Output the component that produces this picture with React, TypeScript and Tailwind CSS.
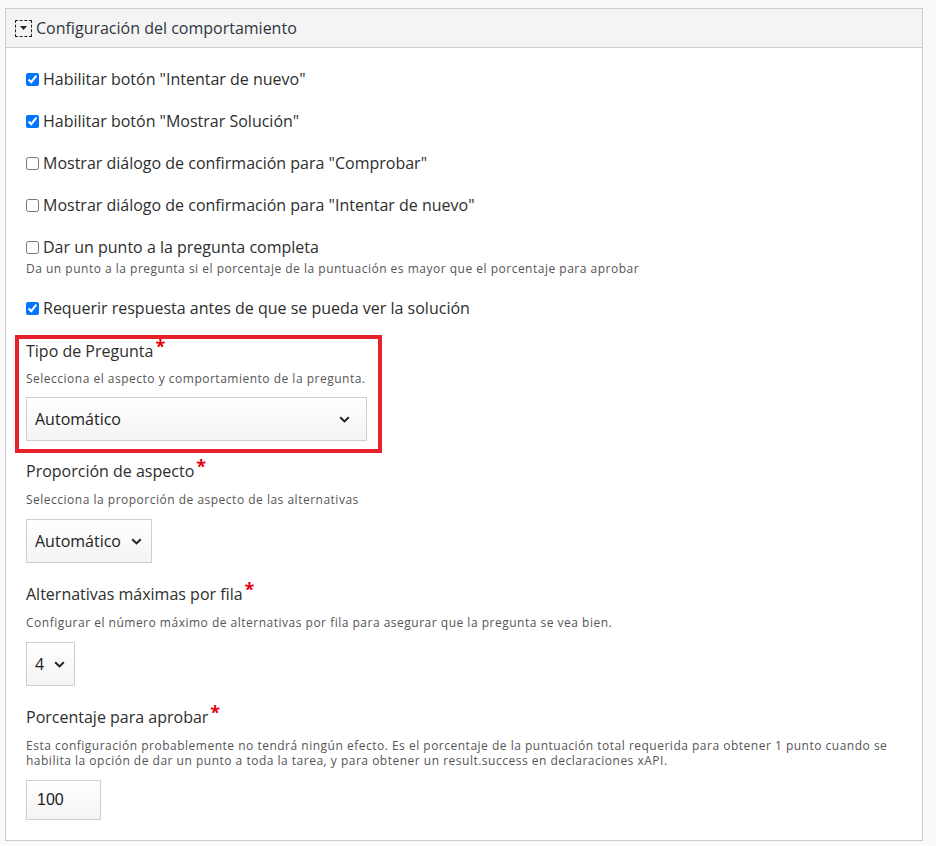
import type { ReactNode } from "react";

const FONT = { fontFamily: '"Open Sans", "Noto Sans", sans-serif' };

function Chevron() {
  return (
    <svg width="11" height="7" viewBox="0 0 11 7" className="shrink-0">
      <path d="M1.2 1.2 L5.5 5.4 L9.8 1.2" fill="none" stroke="#222" strokeWidth="2" />
    </svg>
  );
}

function Check({ label, checked, desc }: { label: string; checked?: boolean; desc?: string }) {
  return (
    <div className={desc ? "mb-[20px]" : "mb-[18px]"}>
      <label className="flex h-6 items-center text-[16px] font-medium text-[#2e2e2e]">
        <input
          type="checkbox"
          defaultChecked={checked}
          className="mr-[4px] h-[13px] w-[13px] accent-[#0075ff]"
        />
        {label}
      </label>
      {desc && <div className="mt-[2px] text-[12px] leading-[15px] tracking-[0.5px] text-[#555]">{desc}</div>}
    </div>
  );
}

function Label({ children }: { children: ReactNode }) {
  return (
    <div className="flex h-6 items-center text-[16px] font-medium text-[#2e2e2e]">
      {children}
      <span className="ml-[2px] -mt-[10px] text-[18px] font-bold text-[#e3000f]">*</span>
    </div>
  );
}

function Select({ value, width, between }: { value: string; width: string; between?: boolean }) {
  return (
    <div
      className={`flex h-[44px] items-center border border-[#cfcfcf] bg-gradient-to-b from-white to-[#f4f4f4] pl-[8px] pr-[16px] text-[16px] text-[#222] ${width} ${
        between ? "justify-between" : "gap-[10px]"
      }`}
    >
      <span>{value}</span>
      <Chevron />
    </div>
  );
}

export default function App() {
  return (
    <div className="min-h-[846px] bg-[#fafafa] pl-[5px] pt-[8px]" style={FONT}>
      <div className="w-[918px] border border-[#cccccc] bg-white">
        {/* en-tête repliable */}
        <div className="flex h-[39px] items-center gap-[4px] border-b border-[#cccccc] bg-[#f4f4f4] pl-[9px] text-[16px] text-[#2f3640]">
          <span className="flex h-[17px] w-[17px] items-center justify-center border border-dashed border-[#222]">
            <svg width="7" height="4" viewBox="0 0 7 4">
              <path d="M0 0 H7 L3.5 4 Z" fill="#222" />
            </svg>
          </span>
          Configuración del comportamiento
        </div>

        <div className="px-5 pb-[20px] pt-[19px]">
          <Check checked label={'Habilitar botón "Intentar de nuevo"'} />
          <Check checked label={'Habilitar botón "Mostrar Solución"'} />
          <Check label={'Mostrar diálogo de confirmación para "Comprobar"'} />
          <Check label={'Mostrar diálogo de confirmación para "Intentar de nuevo"'} />
          <Check
            label="Dar un punto a la pregunta completa"
            desc="Da un punto a la pregunta si el porcentaje de la puntuación es mayor que el porcentaje para aprobar"
          />
          <label className="flex h-6 items-center text-[16px] font-medium text-[#2e2e2e]">
            <input type="checkbox" defaultChecked className="mr-[4px] h-[13px] w-[13px] accent-[#0075ff]" />
            Requerir respuesta antes de que se pueda ver la solución
          </label>

          {/* champ mis en évidence */}
          <div className="-ml-[11px] mt-[15px] w-[367px] border-4 border-[#e8202a] pb-[8px] pl-[7px] pr-[11px]">
            <Label>Tipo de Pregunta</Label>
            <div className="mt-[8px] text-[12px] leading-[15px] tracking-[0.5px] text-[#555]">
              Selecciona el aspecto y comportamiento de la pregunta.
            </div>
            <div className="mt-[11px]">
              <Select value="Automático" width="w-[341px]" between />
            </div>
          </div>

          <div className="mt-[6px]">
            <Label>Proporción de aspecto</Label>
            <div className="mt-[9px] text-[12px] leading-[15px] tracking-[0.5px] text-[#555]">
              Selecciona la proporción de aspecto de las alternativas
            </div>
            <div className="mt-[12px]">
              <Select value="Automático" width="w-[126px]" />
            </div>
          </div>

          <div className="mt-[19px]">
            <Label>Alternativas máximas por fila</Label>
            <div className="mt-[9px] text-[12px] leading-[15px] tracking-[0.5px] text-[#555]">
              Configurar el número máximo de alternativas por fila para asegurar que la pregunta se vea bien.
            </div>
            <div className="mt-[12px]">
              <Select value="4" width="w-[49px]" />
            </div>
          </div>

          <div className="mt-[19px]">
            <Label>Porcentaje para aprobar</Label>
            <div className="mt-[9px] text-[12px] leading-[15px] tracking-[0.5px] text-[#555]">
              Esta configuración probablemente no tendrá ningún efecto. Es el porcentaje de la puntuación total
              requerida para obtener 1 punto cuando se habilita la opción de dar un punto a toda la tarea, y para
              obtener un result.success en declaraciones xAPI.
            </div>
            <input
              defaultValue="100"
              className="mt-[12px] h-[40px] w-[75px] border border-[#cfcfcf] bg-gradient-to-b from-white to-[#f4f4f4] pl-[10px] text-[16px] text-[#222] outline-none"
              style={{ fontFamily: '"Liberation Sans", Arial, sans-serif' }}
            />
          </div>
        </div>
      </div>
    </div>
  );
}
